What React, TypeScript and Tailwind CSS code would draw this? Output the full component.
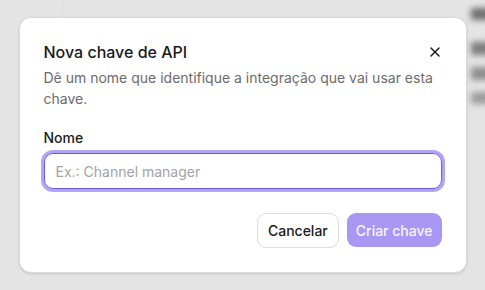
import { X } from "lucide-react";

export default function App() {
  return (
    <div className="relative h-[290px] w-[485px] overflow-hidden bg-[#e4e4e4] font-['Inter',sans-serif]">
      {/* blurred page behind the overlay */}
      <div className="absolute left-[62px] top-0 h-[18px] w-px bg-[#dcdcdc]" />
      <div className="absolute left-[471px] top-[8px] w-[30px] blur-[3px]">
        <div className="h-[12px] bg-[#6e6e6e]" />
        <div className="mt-[22px] h-[13px] bg-[#7c7c7c]" />
        <div className="mt-[12px] h-[13px] bg-[#8e8e8e]" />
        <div className="mt-[12px] h-[12px] bg-[#9c9c9c]" />
      </div>

      <div className="relative flex justify-center pt-[17px]">
        <div className="w-[448px] rounded-[12px] border border-[#dadada] bg-white px-6 pb-[24px] pt-[22px] shadow-sm">
          <div className="flex items-start justify-between">
            <h2 className="text-[16px] font-medium leading-6 text-[#1a1a1a]">Nova chave de API</h2>
            <button type="button" className="-mr-[1px] mt-[4px] text-[#1a1a1a]">
              <X className="h-4 w-4" strokeWidth={2} />
            </button>
          </div>
          <p className="mt-[3px] text-[14px] leading-[21px] text-[#6b6b6b]">
            Dê um nome que identifique a integração que vai usar esta chave.
          </p>

          <label className="mt-[19px] block text-[14px] font-medium leading-5 text-[#1a1a1a]">Nome</label>
          <input
            autoFocus
            placeholder="Ex.: Channel manager"
            className="mt-[5px] h-9 w-full rounded-[9px] border border-[#6b5ce6] px-[11px] text-[14px] text-[#1a1a1a] caret-[#333] outline-none ring-[3px] ring-[#b0a5f6] placeholder:text-[#a3a3a3]"
          />

          <div className="mt-6 flex justify-end gap-2">
            <button
              type="button"
              className="h-[35px] rounded-[9px] border border-[#dedede] bg-white px-[10px] text-[14px] font-medium text-[#1a1a1a]"
            >
              Cancelar
            </button>
            <button
              type="button"
              disabled
              className="h-[34px] rounded-[9px] bg-[#a898f4] px-[9px] text-[14px] font-medium text-white/90"
            >
              Criar chave
            </button>
          </div>
        </div>
      </div>
    </div>
  );
}
